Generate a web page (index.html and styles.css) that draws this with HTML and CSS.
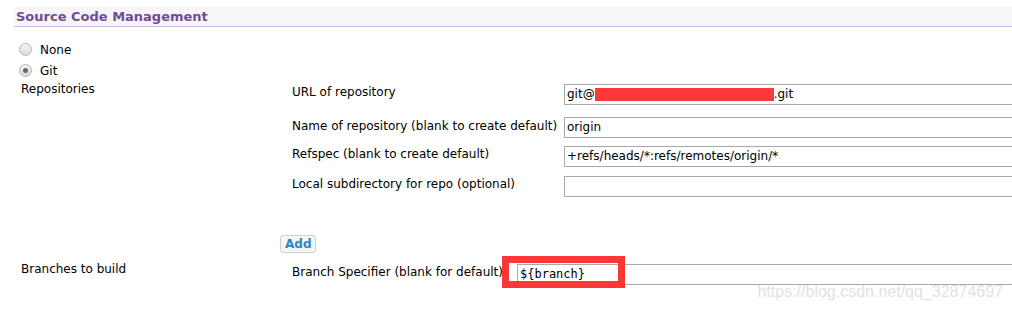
FILE: index.html
```html
<!DOCTYPE html>
<html lang="en">
<head>
  <meta charset="UTF-8">
  <title>Source Code Management</title>
  <link rel="stylesheet" href="styles.css">
</head>
<body>

  <div class="page">
    <div class="section-head">Source Code Management</div>

    <div class="scm-options">
      <label class="radio-row"><span class="radio"></span>None</label>
      <label class="radio-row"><span class="radio checked"></span>Git</label>
    </div>

    <div class="block repos">
      <div class="block-label">Repositories</div>
      <div class="block-body">
        <div class="field-row row-url">
          <div class="field-label">URL of repository</div>
          <div class="field">git@<span class="redacted"></span>.git</div>
        </div>
        <div class="field-row row-name">
          <div class="field-label">Name of repository (blank to create default)</div>
          <div class="field">origin</div>
        </div>
        <div class="field-row row-refspec">
          <div class="field-label">Refspec (blank to create default)</div>
          <div class="field">+refs/heads/*:refs/remotes/origin/*</div>
        </div>
        <div class="field-row row-local">
          <div class="field-label">Local subdirectory for repo (optional)</div>
          <div class="field"></div>
        </div>
        <button type="button" class="add-btn">Add</button>
      </div>
    </div>

    <div class="block branches">
      <div class="block-label">Branches to build</div>
      <div class="block-body">
        <div class="branch-row">
          <div class="field-label">Branch Specifier (blank for default):</div>
          <div class="branch-field">
            <div class="field mono">${branch}</div>
            <div class="highlight"></div>
          </div>
        </div>
      </div>
    </div>
  </div>

  <div class="watermark">https://blog.csdn.net/qq_32874697</div>

</body>
</html>
```

FILE: styles.css
```css
* {
  box-sizing: border-box;
}

body {
  margin: 0;
  width: 1012px;
  height: 311px;
  overflow: hidden;
  background: #fff;
  font-family: "DejaVu Sans", Verdana, sans-serif;
  font-size: 12px;
  color: #000;
}

.page {
  width: 1060px;
}

.section-head {
  margin: 7px 0 0 14px;
  height: 20px;
  padding: 2px 0 0 2px;
  background: #f6f6f9;
  border-bottom: 1px solid #d4b8ec;
  color: #744a96;
  font-weight: bold;
  font-size: 13px;
  line-height: 16px;
}

.scm-options {
  margin-top: 12px;
  padding-left: 19px;
}

.radio-row {
  display: flex;
  align-items: center;
  height: 21px;
  gap: 8px;
}

.radio {
  width: 13px;
  height: 13px;
  border-radius: 50%;
  border: 1px solid #b4b4b4;
  background: linear-gradient(#f6f6f6, #dadada);
  position: relative;
}

.radio.checked::after {
  content: "";
  position: absolute;
  left: 3px;
  top: 3px;
  width: 5px;
  height: 5px;
  border-radius: 50%;
  background: #666;
}

.block {
  display: grid;
  grid-template-columns: 280px 1fr;
}

.block-label {
  padding-left: 21px;
  line-height: 16px;
}

.field-row {
  display: grid;
  grid-template-columns: 284px 1fr;
  align-items: start;
}

.field-label {
  padding-left: 12px;
  padding-top: 1px;
  line-height: 14px;
  white-space: nowrap;
}

.field {
  height: 21px;
  border: 1px solid #a9a9a9;
  padding: 0 2px;
  line-height: 19px;
  white-space: nowrap;
}

.redacted {
  display: inline-block;
  width: 179px;
  height: 13px;
  background: #fd3a3a;
  vertical-align: middle;
}

.row-url {
  margin-top: 3px;
}

.row-name {
  margin-top: 12px;
}

.row-name .field-label {
  padding-top: 2px;
}

.row-refspec {
  margin-top: 8px;
}

.row-local {
  margin-top: 9px;
}

.add-btn {
  display: block;
  margin-top: 38px;
  height: 18px;
  padding: 0 4px;
  border: 1px solid #cfcfcf;
  border-radius: 3px;
  background: #f5f5f5;
  color: #2b88c8;
  font-family: inherit;
  font-size: 12px;
  font-weight: 600;
  line-height: 16px;
}

.branches {
  margin-top: 5px;
}

.branches .block-label {
  padding-top: 3px;
}

.branch-row {
  display: flex;
  align-items: flex-start;
  gap: 10px;
  margin-top: 6px;
}

.branch-field {
  position: relative;
  flex: 1;
}

.mono {
  font-family: "DejaVu Sans Mono", monospace;
}

.highlight {
  position: absolute;
  left: -15px;
  top: -8px;
  width: 123px;
  height: 32px;
  border: 7px solid #fd3636;
}

.watermark {
  position: absolute;
  right: 9px;
  top: 283px;
  font-family: "Liberation Sans", Arial, sans-serif;
  font-size: 16px;
  color: #e2e2e2;
}
```
